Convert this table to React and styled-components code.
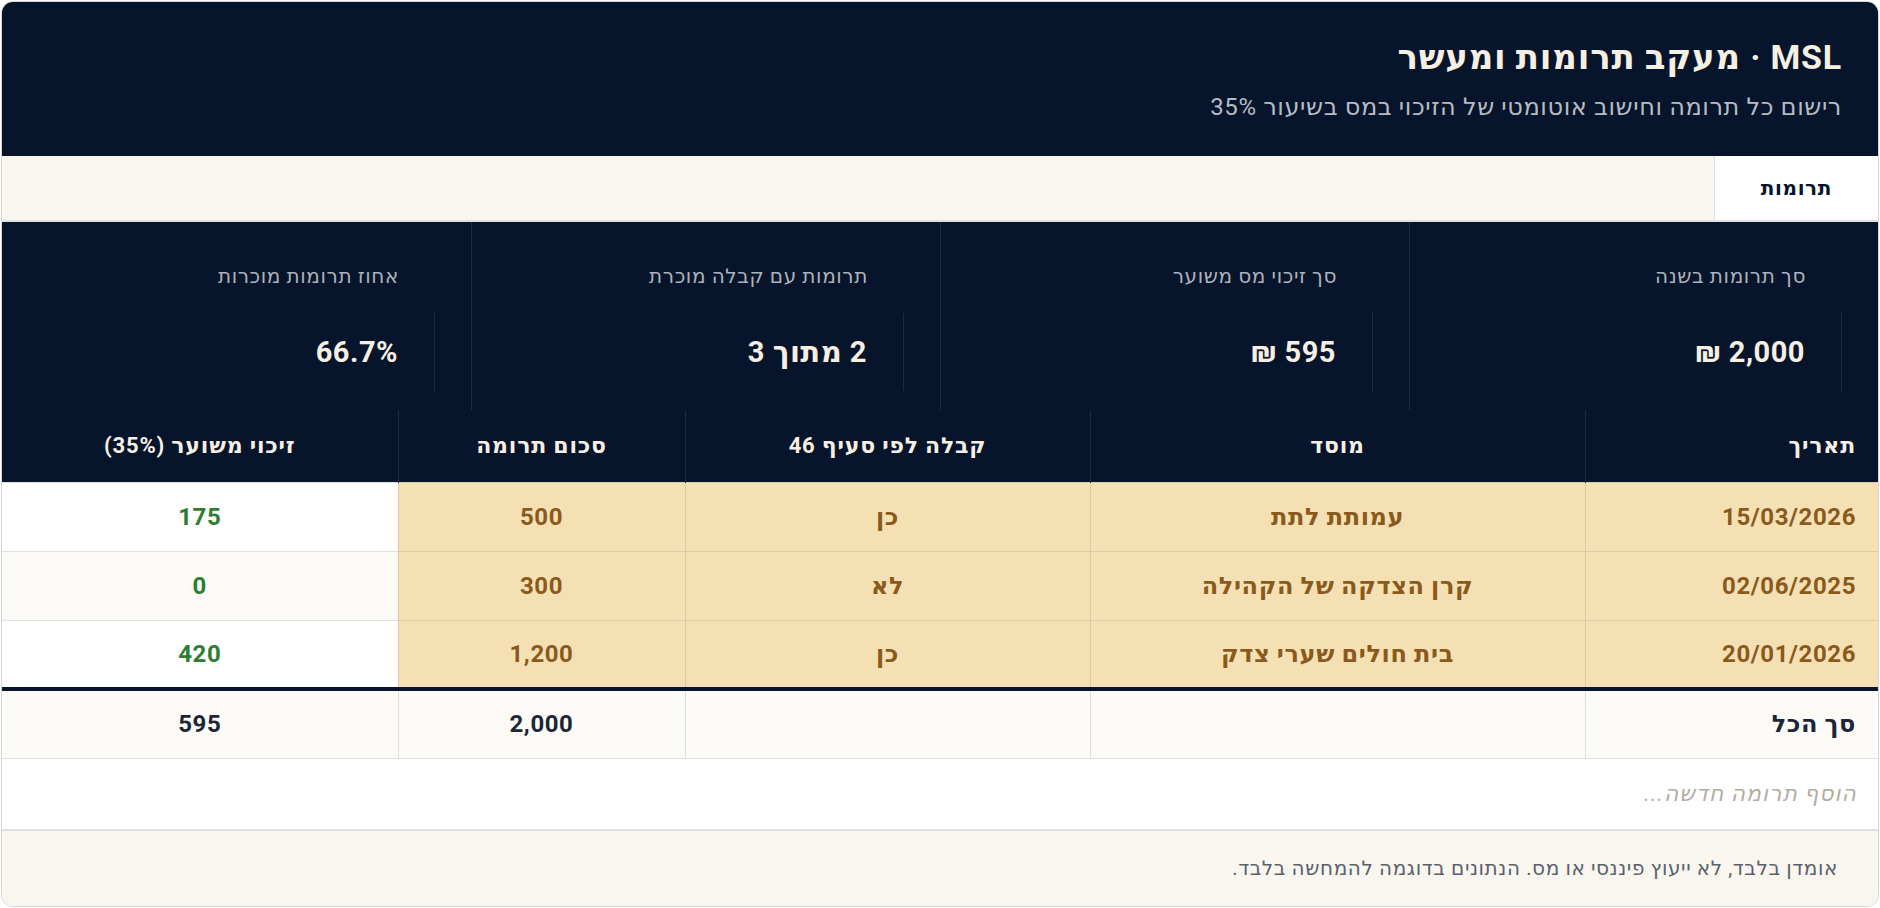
import styled, { createGlobalStyle } from 'styled-components';

// ------------------------------------ Tokens ----------------------------------

const colors = {
  navy: '#06152c',
  navyLine: '#1d2a42',
  cream: '#f7efe1',
  muted: '#aeb2ba',
  paper: '#f9f6ef',
  tan: '#f5e0b3',
  tanLine: '#dccba5',
  brown: '#8a5a1c',
  green: '#2e7d32',
  ink: '#1d2536',
  line: '#e0e0e0',
};

const font = `Roboto, "DejaVu Sans", sans-serif`;

const GlobalStyle = createGlobalStyle`
  * { box-sizing: border-box; }
  body {
    margin: 0;
    background: #ffffff;
    font-family: ${font};
  }
`;

// ------------------------------------ Card ----------------------------------

const Page = styled.div`
  padding: 1px;
  height: 908px;
`;

const Card = styled.div`
  direction: rtl;
  height: 100%;
  border: 1px solid #d6d6d6;
  border-radius: 12px;
  overflow: hidden;
  display: flex;
  flex-direction: column;
  background: #fff;
`;

// ------------------------------------ Header ----------------------------------

const Header = styled.header`
  background: ${colors.navy};
  padding: 34px 36px 0;
  height: 154px;
`;

const Title = styled.h1`
  margin: 0;
  font-size: 34px;
  line-height: 42px;
  font-weight: 700;
  letter-spacing: 0.8px;
  color: ${colors.cream};
`;

const Subtitle = styled.p`
  margin: 14px 0 0;
  font-size: 24px;
  line-height: 30px;
  letter-spacing: 0.6px;
  color: #b7bbc2;
`;

// ------------------------------------ Tabs ----------------------------------

const TabBar = styled.nav`
  display: flex;
  height: 66px;
  background: ${colors.paper};
  border-bottom: 2px solid ${colors.line};
`;

const Tab = styled.div`
  display: flex;
  align-items: center;
  padding: 0 46px;
  font-size: 20px;
  font-weight: 700;
  letter-spacing: 0.6px;
  color: ${colors.navy};
  background: ${(p) => (p.$active ? '#ffffff' : 'transparent')};
  border-left: 1px solid ${colors.line};
`;

// ------------------------------------ Stats ----------------------------------

const Stats = styled.section`
  display: grid;
  grid-template-columns: repeat(4, 1fr);
  background: ${colors.navy};
  height: 188px;
`;

const Stat = styled.div`
  padding: 40px 36px 19px;
  border-left: 1px solid ${colors.navyLine};
  &:last-child {
    border-left: none;
  }
`;

const StatLabel = styled.div`
  padding-right: 36px;
  font-size: 20px;
  line-height: 28px;
  letter-spacing: 0.6px;
  color: ${colors.muted};
`;

const StatValue = styled.div`
  margin-top: 23px;
  height: 78px;
  display: flex;
  align-items: center;
  padding-right: 36px;
  border-right: 1px solid ${colors.navyLine};
  font-size: 29px;
  font-weight: 700;
  letter-spacing: 0.5px;
  color: ${colors.cream};
`;

// ------------------------------------ Table ----------------------------------

const Table = styled.table`
  width: 100%;
  border-collapse: collapse;
  table-layout: fixed;
  font-weight: 700;
`;

const Th = styled.th`
  height: 72px;
  padding: 0 22px;
  font-size: 22px;
  letter-spacing: 0.8px;
  background: ${colors.navy};
  color: ${colors.cream};
  text-align: ${(p) => p.$align || 'center'};
  border-left: 1px solid ${colors.navyLine};
  &:last-child {
    border-left: none;
  }
`;

const Td = styled.td`
  height: 69px;
  padding: 0 22px;
  font-size: 24px;
  letter-spacing: 0.6px;
  text-align: ${(p) => p.$align || 'center'};
  background: ${(p) => (p.$tan ? colors.tan : p.$alt ? '#fbfaf6' : '#ffffff')};
  color: ${(p) => (p.$tan ? colors.brown : colors.green)};
  border: 1px solid ${(p) => (p.$tan ? colors.tanLine : colors.line)};
  &:first-child {
    border-right: none;
  }
  &:last-child {
    border-left: none;
  }
`;

const TotalRow = styled.tr`
  border-top: 4px solid ${colors.navy};
`;

const TotalCell = styled.td`
  height: 69px;
  padding: 0 22px;
  font-size: 24px;
  letter-spacing: 0.6px;
  text-align: ${(p) => p.$align || 'center'};
  background: #fcfbf7;
  color: ${colors.ink};
  border: 1px solid ${colors.line};
  border-top: none;
  &:first-child {
    border-right: none;
  }
  &:last-child {
    border-left: none;
  }
`;

// ------------------------------------ Add row / footer ----------------------------------

const AddRow = styled.div`
  height: 72px;
  display: flex;
  align-items: center;
  padding: 0 21px;
  font-size: 22px;
  font-style: italic;
  letter-spacing: 1px;
  color: #b3ada2;
  border-bottom: 2px solid ${colors.line};
`;

const Footer = styled.footer`
  flex: 1;
  display: flex;
  align-items: center;
  padding: 0 40px;
  background: ${colors.paper};
  font-size: 20px;
  letter-spacing: 0.6px;
  color: #5a616d;
`;

// ------------------------------------ Data ----------------------------------

const stats = [
  { label: 'סך תרומות בשנה', value: '2,000 ₪' },
  { label: 'סך זיכוי מס משוער', value: '595 ₪' },
  { label: 'תרומות עם קבלה מוכרת', value: '2 מתוך 3' },
  { label: 'אחוז תרומות מוכרות', value: '66.7%' },
];

const rows = [
  { date: '15/03/2026', org: 'עמותת לתת', receipt: 'כן', amount: '500', credit: '175' },
  { date: '02/06/2025', org: 'קרן הצדקה של הקהילה', receipt: 'לא', amount: '300', credit: '0' },
  { date: '20/01/2026', org: 'בית חולים שערי צדק', receipt: 'כן', amount: '1,200', credit: '420' },
];

const widths = [293, 495, 405, 287, 396];

// ------------------------------------ App ----------------------------------

export default function App() {
  return (
    <Page>
      <GlobalStyle />
      <Card>
        <Header>
          <Title>MSL · מעקב תרומות ומעשר</Title>
          <Subtitle>רישום כל תרומה וחישוב אוטומטי של הזיכוי במס בשיעור 35%</Subtitle>
        </Header>

        <TabBar>
          <Tab $active>תרומות</Tab>
        </TabBar>

        <Stats>
          {stats.map((s) => (
            <Stat key={s.label}>
              <StatLabel>{s.label}</StatLabel>
              <StatValue>{s.value}</StatValue>
            </Stat>
          ))}
        </Stats>

        <Table>
          <colgroup>
            {widths.map((w, i) => (
              <col key={i} style={{ width: w }} />
            ))}
          </colgroup>
          <thead>
            <tr>
              <Th $align="right">תאריך</Th>
              <Th>מוסד</Th>
              <Th>קבלה לפי סעיף 46</Th>
              <Th>סכום תרומה</Th>
              <Th>זיכוי משוער (35%)</Th>
            </tr>
          </thead>
          <tbody>
            {rows.map((r, i) => (
              <tr key={r.date}>
                <Td $tan $align="right">{r.date}</Td>
                <Td $tan>{r.org}</Td>
                <Td $tan>{r.receipt}</Td>
                <Td $tan>{r.amount}</Td>
                <Td $alt={i % 2 === 1}>{r.credit}</Td>
              </tr>
            ))}
            <TotalRow>
              <TotalCell $align="right">סך הכל</TotalCell>
              <TotalCell />
              <TotalCell />
              <TotalCell>2,000</TotalCell>
              <TotalCell>595</TotalCell>
            </TotalRow>
          </tbody>
        </Table>

        <AddRow>הוסף תרומה חדשה...</AddRow>

        <Footer>אומדן בלבד, לא ייעוץ פיננסי או מס. הנתונים בדוגמה להמחשה בלבד.</Footer>
      </Card>
    </Page>
  );
}
